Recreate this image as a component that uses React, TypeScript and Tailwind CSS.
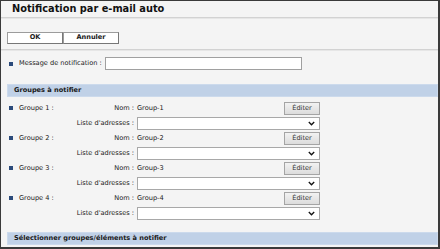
import React from "react";

const Bullet = () => <span className="inline-block w-[4px] h-[4px] bg-[#2b4a7a] mr-[6px] shrink-0" />;

const Chevron = () => (
  <svg width="7" height="5" viewBox="0 0 7 5" className="mr-[4px]">
    <path d="M0.8 1 L3.5 3.8 L6.2 1" fill="none" stroke="#111" strokeWidth="1.3" />
  </svg>
);

const Line = () => <div className="h-[2px] border-t border-t-[#d2d2d2] border-b border-b-[#e6e6e6] mr-0" />;

const Group = ({ n }: { n: number }) => (
  <div className="flex flex-col">
    <div className="flex items-center h-[15px]">
      <div className="flex items-center w-[136px] pl-[8px]">
        <Bullet />
        <span className="flex-1">Groupe {n} :</span>
        <span className="pr-[3px]">Nom :</span>
      </div>
      <div className="flex items-center w-[183px]">
        <span className="flex-1">Group-{n}</span>
        <div className="w-[36px] h-[13px] flex items-center justify-center border border-[#a4a4a4] bg-gradient-to-b from-[#f2f2f2] to-[#dcdcdc] text-[#333]">
          Éditer
        </div>
      </div>
    </div>
    <div className="flex items-center h-[15px]">
      <div className="flex items-center justify-end w-[136px] pr-[3px]">Liste d'adresses :</div>
      <div className="w-[183px] h-[13px] bg-white border border-[#a8a8a8] flex items-center justify-end">
        <Chevron />
      </div>
    </div>
  </div>
);

export default function App() {
  return (
    <div
      className="w-[440px] h-[249px] bg-[#f4f4f4] border-t border-l border-r-2 border-b-2 border-[#3a3a3a] overflow-hidden text-[6.6px] text-[#1a1a1a] flex flex-col"
      style={{ fontFamily: '"DejaVu Sans", Verdana, sans-serif' }}
    >
      <div className="h-[16px] flex items-center pl-[11px] font-bold text-[9.8px] text-[#111]">
        Notification par e-mail auto
      </div>
      <Line />
      <div className="flex mt-[13px] ml-[6px] h-[12px] font-bold">
        <div className="w-[56px] h-[12px] flex items-center justify-center bg-white border border-[#9c9c9c] border-r-[#777] border-b-[#777]">OK</div>
        <div className="w-[56px] h-[12px] flex items-center justify-center bg-white border border-[#9c9c9c] border-r-[#777] border-b-[#777]">Annuler</div>
      </div>
      <div className="mt-[5px]">
        <Line />
      </div>
      <div className="flex items-center mt-[6px] h-[13px] pl-[8px]">
        <Bullet />
        <span className="w-[86px]">Message de notification :</span>
        <div className="w-[197px] h-[13px] bg-white border border-[#a0a0a0]" />
      </div>
      <div className="mt-[14px] ml-[6px] h-[13px] bg-[#c0d1e7] border border-[#ccdaec] flex items-center pl-[6px] font-bold">
        Groupes à notifier
      </div>
      <div className="mt-[4px] flex flex-col">
        <Group n={1} />
        <Group n={2} />
        <Group n={3} />
        <Group n={4} />
      </div>
      <div className="mt-[11px] ml-[6px] h-[13px] bg-[#c0d1e7] border border-[#ccdaec] flex items-center pl-[6px] font-bold">
        Sélectionner groupes/éléments à notifier
      </div>
    </div>
  );
}
